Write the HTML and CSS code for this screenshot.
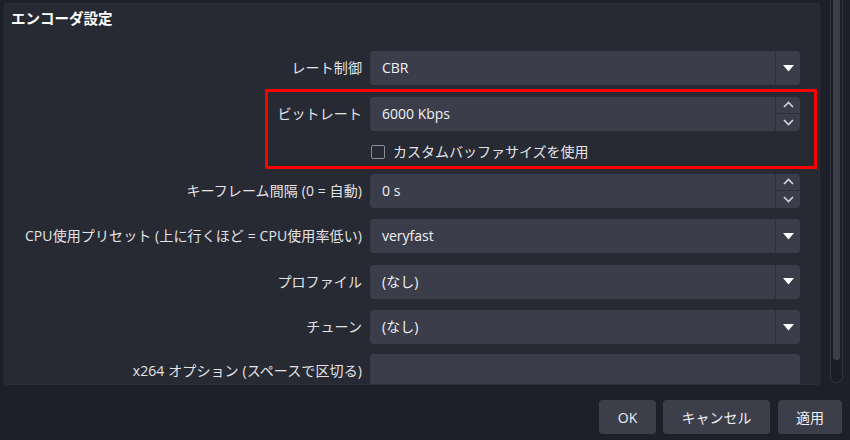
FILE: index.html
```html
<!DOCTYPE html>
<html lang="ja">
<head>
    <meta charset="UTF-8">
    <title>エンコーダ設定</title>
    <link rel="stylesheet" href="styles.css">
</head>
<body>

<div class="content">
    <section class="group">
        <h3 class="group-title">エンコーダ設定</h3>
        <div class="form">
            <div class="row">
                <span class="label">レート制御</span>
                <div class="field combo">
                    <span class="value">CBR</span>
                    <span class="combo-btn">
                        <svg width="11" height="7" viewBox="0 0 11 7"><polygon points="0,0 11,0 5.5,6.5" fill="#ffffff"/></svg>
                    </span>
                </div>
            </div>

            <!-- highlighted: bitrate + buffer -->
            <div class="highlight">
                <div class="row">
                    <span class="label">ビットレート</span>
                    <div class="field spin">
                        <span class="value">6000 Kbps</span>
                        <span class="spin-btns">
                            <span class="spin-up"><svg width="11" height="7" viewBox="0 0 11 7"><polyline points="1,6 5.5,1.5 10,6" fill="none" stroke="#d6d7dc" stroke-width="1.6"/></svg></span>
                            <span class="spin-down"><svg width="11" height="7" viewBox="0 0 11 7"><polyline points="1,1 5.5,5.5 10,1" fill="none" stroke="#d6d7dc" stroke-width="1.6"/></svg></span>
                        </span>
                    </div>
                </div>
                <div class="row check-row">
                    <span class="label"></span>
                    <label class="check"><span class="box"></span>カスタムバッファサイズを使用</label>
                </div>
            </div>

            <div class="row">
                <span class="label">キーフレーム間隔 (0 = 自動)</span>
                <div class="field spin">
                    <span class="value">0 s</span>
                    <span class="spin-btns">
                        <span class="spin-up"><svg width="11" height="7" viewBox="0 0 11 7"><polyline points="1,6 5.5,1.5 10,6" fill="none" stroke="#d6d7dc" stroke-width="1.6"/></svg></span>
                        <span class="spin-down"><svg width="11" height="7" viewBox="0 0 11 7"><polyline points="1,1 5.5,5.5 10,1" fill="none" stroke="#d6d7dc" stroke-width="1.6"/></svg></span>
                    </span>
                </div>
            </div>
            <div class="row">
                <span class="label">CPU使用プリセット (上に行くほど = CPU使用率低い)</span>
                <div class="field combo">
                    <span class="value">veryfast</span>
                    <span class="combo-btn"><svg width="11" height="7" viewBox="0 0 11 7"><polygon points="0,0 11,0 5.5,6.5" fill="#ffffff"/></svg></span>
                </div>
            </div>
            <div class="row">
                <span class="label">プロファイル</span>
                <div class="field combo">
                    <span class="value">(なし)</span>
                    <span class="combo-btn"><svg width="11" height="7" viewBox="0 0 11 7"><polygon points="0,0 11,0 5.5,6.5" fill="#ffffff"/></svg></span>
                </div>
            </div>
            <div class="row">
                <span class="label">チューン</span>
                <div class="field combo">
                    <span class="value">(なし)</span>
                    <span class="combo-btn"><svg width="11" height="7" viewBox="0 0 11 7"><polygon points="0,0 11,0 5.5,6.5" fill="#ffffff"/></svg></span>
                </div>
            </div>
            <div class="row row-options">
                <span class="label">x264 オプション (スペースで区切る)</span>
                <div class="field text"></div>
            </div>
        </div>
    </section>

    <div class="scrollbar"><div class="handle"></div></div>
</div>

<div class="buttons">
    <button class="btn btn-ok">OK</button>
    <button class="btn btn-cancel">キャンセル</button>
    <button class="btn btn-apply">適用</button>
</div>

</body>
</html>
```

FILE: styles.css
```css
body {
    margin: 0;
    width: 850px;
    height: 440px;
    overflow: hidden;
    background-color: #1e2029;
    color: #e2e3e8;
    font-family: "Open Sans", "Noto Sans CJK JP", sans-serif;
    font-size: 14px;
}
.content {
    display: flex;
    height: 385px;
    padding-left: 4px;
    box-sizing: border-box;
}
.group {
    width: 816px;
    height: 382px;
    margin-top: 3px;
    background-color: #272a33;
    border: 1px solid #2c2f39;
    border-radius: 3px;
    box-sizing: border-box;
    overflow: hidden;
    padding: 5px 19px 0 0;
}
.group-title {
    margin: 0 0 0 6px;
    font-size: 14.5px;
    font-weight: bold;
    line-height: 20px;
    color: #ffffff;
}
.form {
    margin-top: 22px;
    display: flex;
    flex-direction: column;
    gap: 11.5px;
}
.row {
    display: flex;
    align-items: center;
}
.row-options {
    margin-top: -2px;
}
.label {
    width: 357px;
    flex-shrink: 0;
    margin-right: 8px;
    text-align: right;
    line-height: 20px;
    white-space: nowrap;
    letter-spacing: 0.1px;
}
.field {
    flex: 1;
    height: 34px;
    display: flex;
    align-items: center;
    background-color: #3b3e4a;
    border-radius: 4px;
    box-sizing: border-box;
}
.value {
    flex: 1;
    padding-left: 12px;
    color: #f0f1f4;
    line-height: 20px;
}
.combo-btn {
    width: 25px;
    height: 100%;
    display: flex;
    align-items: center;
    justify-content: center;
    border-left: 1px solid #2d2f39;
    box-sizing: border-box;
}
.spin-btns {
    width: 25px;
    height: 100%;
    display: flex;
    flex-direction: column;
    border-left: 1px solid #2d2f39;
    box-sizing: border-box;
}
.spin-up,
.spin-down {
    flex: 1;
    display: flex;
    align-items: center;
    justify-content: center;
}
.spin-up {
    border-bottom: 1px solid #2d2f39;
}
.highlight {
    position: relative;
    display: flex;
    flex-direction: column;
    gap: 11.5px;
}
.highlight::after {
    content: "";
    position: absolute;
    top: -8px;
    bottom: -7px;
    left: 260px;
    right: -17px;
    border: 3px solid #ff0000;
}
.check-row {
    height: 20px;
}
.check {
    display: flex;
    align-items: center;
    gap: 8px;
    line-height: 20px;
    margin-left: 1px;
}
.box {
    width: 12px;
    height: 12px;
    border: 1.5px solid #8b8d96;
    border-radius: 2px;
}
.scrollbar {
    width: 13px;
    height: 383px;
    margin-left: 10px;
    border: 1px solid #2f323c;
    border-top: none;
    border-radius: 0 0 6px 6px;
    box-sizing: border-box;
    padding: 0 2px;
    background-color: #1b1d25;
}
.handle {
    height: 360px;
    background-color: #3c3f4b;
    border-radius: 0 0 3px 3px;
}
.buttons {
    display: flex;
    justify-content: flex-end;
    gap: 7px;
    padding: 15px 8px 0 0;
}
.btn {
    height: 34px;
    border: none;
    border-radius: 4px;
    background-color: #3c3e4a;
    color: #eeeff2;
    font-family: "Open Sans", "Noto Sans CJK JP", sans-serif;
    font-size: 14px;
    padding: 0;
}
.btn-ok {
    width: 57px;
}
.btn-cancel {
    width: 107px;
    margin-right: 1px;
}
.btn-apply {
    width: 64px;
}
```
